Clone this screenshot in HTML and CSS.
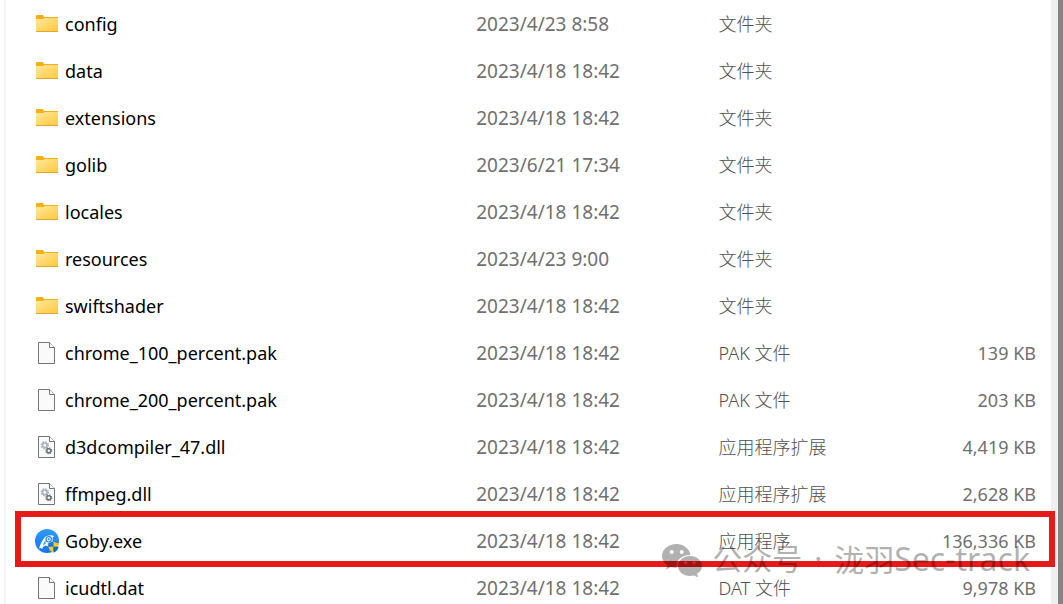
FILE: index.html
```html
<!DOCTYPE html>
<html lang="zh-CN">
<head>
<meta charset="utf-8">
<meta name="viewport" content="width=device-width, initial-scale=1">
<title>Goby</title>
<link rel="stylesheet" href="styles.css">
</head>
<body>
<svg class="defs" aria-hidden="true">
  <defs>
    <linearGradient id="folder-fill" x1="0" y1="0" x2="1" y2="1">
      <stop offset="0" stop-color="#ffe8a0"/>
      <stop offset="1" stop-color="#ffc93a"/>
    </linearGradient>
    <linearGradient id="goby-fill" x1="0" y1="0" x2="0" y2="1">
      <stop offset="0" stop-color="#2f9bfa"/>
      <stop offset="1" stop-color="#1673ee"/>
    </linearGradient>
    <symbol id="folder" viewBox="0 0 24 24">
      <path d="M1 5V4a1 1 0 0 1 1-1h6l1 2H23v2H1z" fill="#f5b017"/>
      <path d="M1 7h7.500l1-1H23v13.500H1z" fill="url(#folder-fill)"/>
      <path d="M1 19h22v1H1z" fill="#e8a52c"/>
    </symbol>
    <symbol id="file" viewBox="0 0 24 24">
      <path d="M3.500 1.500h11l5 5v16h-16z" fill="#fafafa" stroke="#757575"/>
      <path d="M14.500 1.500v5h5" fill="#fff" stroke="#757575"/>
    </symbol>
    <symbol id="library" viewBox="0 0 24 24">
      <use href="#file"/>
      <circle cx="9.800" cy="10.300" r="3.400" fill="none" stroke="#aab2bd" stroke-width="1.600" stroke-dasharray="1.500 1.170"/>
      <circle cx="9.800" cy="10.300" r="2.300" fill="none" stroke="#aab2bd" stroke-width="1.600"/>
      <circle cx="13.800" cy="15.800" r="2.900" fill="none" stroke="#737e85" stroke-width="1.300" stroke-dasharray="1.200 1.070"/>
      <circle cx="13.800" cy="15.800" r="2" fill="#fafafa" stroke="#647078" stroke-width="1.400"/>
    </symbol>
    <symbol id="goby" viewBox="0 0 24 24">
      <circle cx="12" cy="12" r="12" fill="url(#goby-fill)"/>
      <path d="M4 19.500C5 16 6.500 13 8.300 10.300 9.500 8 11.500 6.500 15 6.300l3 .2 1 1.300-1.400.5v4.200l-4 1.500-.6 3.200-2.500-.7-2.300 1.300-1.200 2.200-1.200-.9z" fill="#fff"/>
      <path d="M7.800 16.800c.4-2.200 1.200-4 2.400-5.600l.8 3.300z" fill="#55abff"/>
      <circle cx="13.700" cy="10.300" r="2.700" fill="#fff" stroke="#2389f5" stroke-width="1.200"/>
      <circle cx="13.700" cy="10.300" r="1" fill="#2389f5"/>
      <path d="M18.500 12.500c-1.600 1.200-3.100 1.500-5 1.600v3.700h5z" fill="#1b76d8"/>
      <path d="M18.500 12.500c1.600 1.200 3.100 1.500 5 1.600v3.700h-5z" fill="#ffca28"/>
      <path d="M13.500 17.800h5v6c-2.600-1.300-4.700-3-5-6z" fill="#ffca28"/>
      <path d="M18.500 17.800h5c-.3 3-2.400 4.700-5 6z" fill="#1267c4"/>
    </symbol>
  </defs>
</svg>
<main class="window">
  <section class="pane">
    <table class="files">
      <colgroup><col class="col-name"><col class="col-date"><col class="col-type"><col class="col-size"></colgroup>
      <tbody>
        <tr><td class="name"><span class="entry"><svg class="icon"><use href="#folder"/></svg>config</span></td><td class="date">2023/4/23 8:58</td><td class="type">文件夹</td><td class="size"></td></tr>
        <tr><td class="name"><span class="entry"><svg class="icon"><use href="#folder"/></svg>data</span></td><td class="date">2023/4/18 18:42</td><td class="type">文件夹</td><td class="size"></td></tr>
        <tr><td class="name"><span class="entry"><svg class="icon"><use href="#folder"/></svg>extensions</span></td><td class="date">2023/4/18 18:42</td><td class="type">文件夹</td><td class="size"></td></tr>
        <tr><td class="name"><span class="entry"><svg class="icon"><use href="#folder"/></svg>golib</span></td><td class="date">2023/6/21 17:34</td><td class="type">文件夹</td><td class="size"></td></tr>
        <tr><td class="name"><span class="entry"><svg class="icon"><use href="#folder"/></svg>locales</span></td><td class="date">2023/4/18 18:42</td><td class="type">文件夹</td><td class="size"></td></tr>
        <tr><td class="name"><span class="entry"><svg class="icon"><use href="#folder"/></svg>resources</span></td><td class="date">2023/4/23 9:00</td><td class="type">文件夹</td><td class="size"></td></tr>
        <tr><td class="name"><span class="entry"><svg class="icon"><use href="#folder"/></svg>swiftshader</span></td><td class="date">2023/4/18 18:42</td><td class="type">文件夹</td><td class="size"></td></tr>
        <tr><td class="name"><span class="entry"><svg class="icon"><use href="#file"/></svg>chrome_100_percent.pak</span></td><td class="date">2023/4/18 18:42</td><td class="type">PAK 文件</td><td class="size">139 KB</td></tr>
        <tr><td class="name"><span class="entry"><svg class="icon"><use href="#file"/></svg>chrome_200_percent.pak</span></td><td class="date">2023/4/18 18:42</td><td class="type">PAK 文件</td><td class="size">203 KB</td></tr>
        <tr><td class="name"><span class="entry"><svg class="icon"><use href="#library"/></svg>d3dcompiler_47.dll</span></td><td class="date">2023/4/18 18:42</td><td class="type">应用程序扩展</td><td class="size">4,419 KB</td></tr>
        <tr><td class="name"><span class="entry"><svg class="icon"><use href="#library"/></svg>ffmpeg.dll</span></td><td class="date">2023/4/18 18:42</td><td class="type">应用程序扩展</td><td class="size">2,628 KB</td></tr>
        <tr><td class="name"><span class="entry"><svg class="icon"><use href="#goby"/></svg>Goby.exe</span></td><td class="date">2023/4/18 18:42</td><td class="type">应用程序</td><td class="size">136,336 KB</td></tr>
        <tr><td class="name"><span class="entry"><svg class="icon"><use href="#file"/></svg>icudtl.dat</span></td><td class="date">2023/4/18 18:42</td><td class="type">DAT 文件</td><td class="size">9,978 KB</td></tr>
      </tbody>
    </table>
    <div class="highlight"></div>
  </section>
  <div class="track"></div>
  <div class="edge"></div>
  <div class="watermark">
    <svg class="wechat" viewBox="0 0 42 34" aria-hidden="true">
      <path fill-rule="evenodd" d="M14.500 1C6.500 1 0 6.300 0 13c0 3.800 2 7 5.300 9.200L4 26.500l5-2.600c1.800.6 3.700.9 5.600.8C13.500 17.500 19.500 11.800 28.500 12 27.500 5.700 21.500 1 14.500 1zM9.700 7a2 2 0 1 1 0 4 2 2 0 0 1 0-4zm10 0a2 2 0 1 1 0 4 2 2 0 0 1 0-4z"/>
      <path fill-rule="evenodd" d="M28 13c-6.700 0-12 4.500-12 10s5.300 10 12 10c1.400 0 2.700-.2 4-.5l4.300 2-1.200-3.700C38.200 29 40 26.200 40 23c0-5.500-5.300-10-12-10zm-4.200 5a1.700 1.700 0 1 1 0 3.400 1.700 1.700 0 0 1 0-3.400zm8.300 0a1.700 1.700 0 1 1 0 3.400 1.700 1.700 0 0 1 0-3.400z"/>
    </svg>
    <span class="account"><span>公众号</span><span>·</span><span>泷羽<span class="latin">Sec-track</span></span></span>
  </div>
</main>
</body>
</html>
```

FILE: styles.css
```css
* { box-sizing: border-box; }
body {
  margin: 0;
  overflow: hidden;
  background: #fff;
  color: #707070;
  font-family: "Noto Sans", "Noto Sans CJK SC", sans-serif;
  font-size: 18px;
  line-height: 24px;
}
.defs { position: absolute; width: 0; height: 0; }
.window {
  position: relative;
  display: flex;
  height: 100vh;
  padding-left: 4px;
  overflow: hidden;
}
.pane {
  position: relative;
  flex: 1;
  min-width: 0;
  border-left: 2px solid #f5f5f5;
}
.files {
  width: 100%;
  table-layout: fixed;
  border-collapse: collapse;
}
.col-name { width: 45%; }
.col-date { width: 23%; }
.col-type { width: 16%; }
.col-size { width: 16%; }
.files tr { height: 47px; }
.files td { padding: 1px 0 0; white-space: nowrap; }
.files .name { padding-left: 29px; color: #000; }
.files .date { font-size: 19px; }
.files .type { padding-left: 2px; color: #505050; font-weight: 300; }
.files .size { padding-right: 15px; text-align: right; }
.entry { display: flex; align-items: center; gap: 6px; }
.icon { width: 24px; height: 24px; flex: none; }
.highlight {
  position: absolute;
  top: 511px;
  left: 9px;
  right: -4px;
  height: 56px;
  border: 6px solid #e71a1a;
  z-index: 1;
}
.track { width: 7px; background: #efefef; }
.edge { width: 5px; background: #848484; }
.watermark {
  position: absolute;
  right: 33px;
  bottom: 26px;
  z-index: 2;
  display: flex;
  align-items: center;
  gap: 8px;
  color: #000;
  font-size: 30px;
  line-height: 36px;
  white-space: nowrap;
  opacity: 0.3;
}
.account { display: flex; gap: 12px; }
.latin { font-size: 32px; }
.wechat { width: 42px; height: 34px; fill: currentColor; }
```
